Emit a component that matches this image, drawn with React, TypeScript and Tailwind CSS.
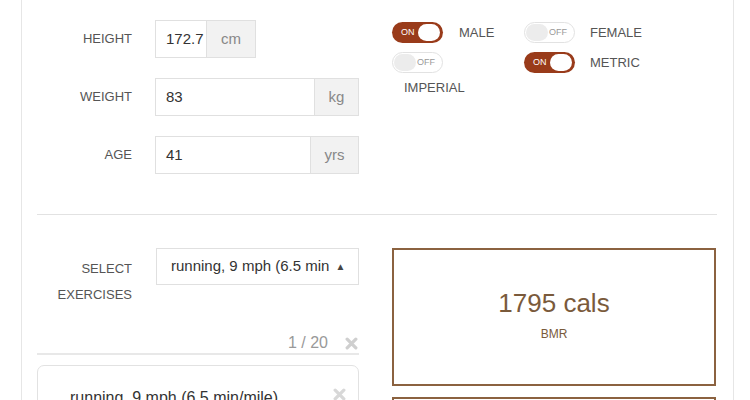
import React from "react"

// unit input with grey addon on the right
const UnitField = ({
  label,
  value,
  unit,
  width,
  addonWidth,
}: {
  label: string
  value: string
  unit: string
  width: string
  addonWidth: string
}) => (
  <div className="flex items-center">
    <div className="w-[95px] text-right text-[13px] text-[#555]">{label}</div>
    <div className={`ml-[23px] flex h-[38px] border border-[#e0e0e0] ${width}`}>
      <div className="flex flex-1 items-center overflow-hidden whitespace-nowrap pl-[10px] pr-[10px] text-[15px] text-[#333]">
        {value}
      </div>
      <div
        className={`flex items-center justify-center border-l border-[#e0e0e0] bg-[#f2f2f2] text-[15px] text-[#888] ${addonWidth}`}
      >
        {unit}
      </div>
    </div>
  </div>
)

const Toggle = ({ on }: { on: boolean }) =>
  on ? (
    <div className="relative h-[21px] w-[51px] rounded-full bg-[#993b1a]">
      <span className="absolute left-[9px] top-[5px] text-[9px] leading-[11px] text-white">ON</span>
      <span className="absolute right-[3px] top-[2px] h-[17px] w-[22px] rounded-full bg-white" />
    </div>
  ) : (
    <div className="relative h-[21px] w-[51px] rounded-full border border-[#e2e2e2] bg-white">
      <span className="absolute left-[1px] top-[1px] h-[17px] w-[22px] rounded-full bg-[#ececec]" />
      <span className="absolute right-[7px] top-[4px] text-[9px] leading-[11px] text-[#999]">OFF</span>
    </div>
  )

const Cross = ({ className }: { className: string }) => (
  <svg viewBox="0 0 12 12" className={className}>
    <path d="M2 2 L10 10 M10 2 L2 10" stroke="currentColor" strokeWidth="3" strokeLinecap="round" />
  </svg>
)

export default function App() {
  return (
    <div
      className="h-[400px] w-[750px] overflow-hidden bg-white"
      style={{ fontFamily: '"Liberation Sans", Arial, sans-serif' }}
    >
      <div className="ml-[21px] h-full w-[713px] border-x border-[#e6e6e6] pl-[15px] pr-[16px]">
        {/* top section */}
        <div className="flex pt-[20px]">
          <div className="flex w-[322px] flex-col gap-[20px]">
            <UnitField label="HEIGHT" value="172.7" unit="cm" width="w-[101px]" addonWidth="w-[49px]" />
            <UnitField label="WEIGHT" value="83" unit="kg" width="w-[204px]" addonWidth="w-[44px]" />
            <UnitField label="AGE" value="41" unit="yrs" width="w-[204px]" addonWidth="w-[48px]" />
          </div>
          <div className="ml-[33px] flex pt-[2px] text-[13px] text-[#555]">
            <div className="flex w-[132px] flex-col">
              <div className="flex items-center">
                <Toggle on />
                <span className="ml-[16px]">MALE</span>
              </div>
              <div className="mt-[9px]">
                <Toggle on={false} />
              </div>
              <div className="mt-[5px] pl-[12px]">IMPERIAL</div>
            </div>
            <div className="flex flex-col">
              <div className="flex items-center">
                <Toggle on={false} />
                <span className="ml-[15px]">FEMALE</span>
              </div>
              <div className="mt-[9px] flex items-center">
                <Toggle on />
                <span className="ml-[15px]">METRIC</span>
              </div>
            </div>
          </div>
        </div>

        <div className="mt-[40px] border-t border-[#e2e2e2]" />

        {/* bottom section */}
        <div className="flex pt-[33px]">
          <div className="w-[322px]">
            <div className="flex">
              <div className="w-[95px] pt-[8px] text-right text-[13px] leading-[26px] text-[#555]">
                SELECT
                <br />
                EXERCISES
              </div>
              <div className="ml-[24px] flex h-[37px] w-[203px] items-center border border-[#e0e0e0] pl-[14px] text-[15px] text-[#333]">
                <span className="overflow-hidden whitespace-nowrap">running, 9 mph (6.5 min</span>
                <span className="ml-[6px] text-[10px] text-[#444]">▲</span>
              </div>
            </div>
            <div className="mt-[25px] flex h-[22px] items-center justify-end border-b-2 border-[#e8e8e8] text-[16px] text-[#999]">
              <span>1 / 20</span>
              <Cross className="ml-[17px] mr-[1px] h-[13px] w-[13px] text-[#cfcfcf]" />
            </div>
            <div className="mt-[10px] flex h-[60px] items-start rounded-[7px] border border-[#e2e2e2] pl-[32px] pr-[12px] pt-[20px] text-[16px] text-[#333]">
              <span className="flex-1">running, 9 mph (6.5 min/mile)</span>
              <Cross className="mt-[2px] h-[13px] w-[13px] text-[#d8d8d8]" />
            </div>
          </div>
          <div className="ml-[33px] flex w-[324px] flex-col">
            <div className="flex h-[138px] flex-col items-center border-2 border-[#8b6240] pt-[38px] text-[#7a5a3b]">
              <div className="text-[26px] leading-[30px]">1795 cals</div>
              <div className="mt-[7px] text-[12px]">BMR</div>
            </div>
            <div className="mt-[11px] h-[60px] border-2 border-[#8b6240]" />
          </div>
        </div>
      </div>
    </div>
  )
}
